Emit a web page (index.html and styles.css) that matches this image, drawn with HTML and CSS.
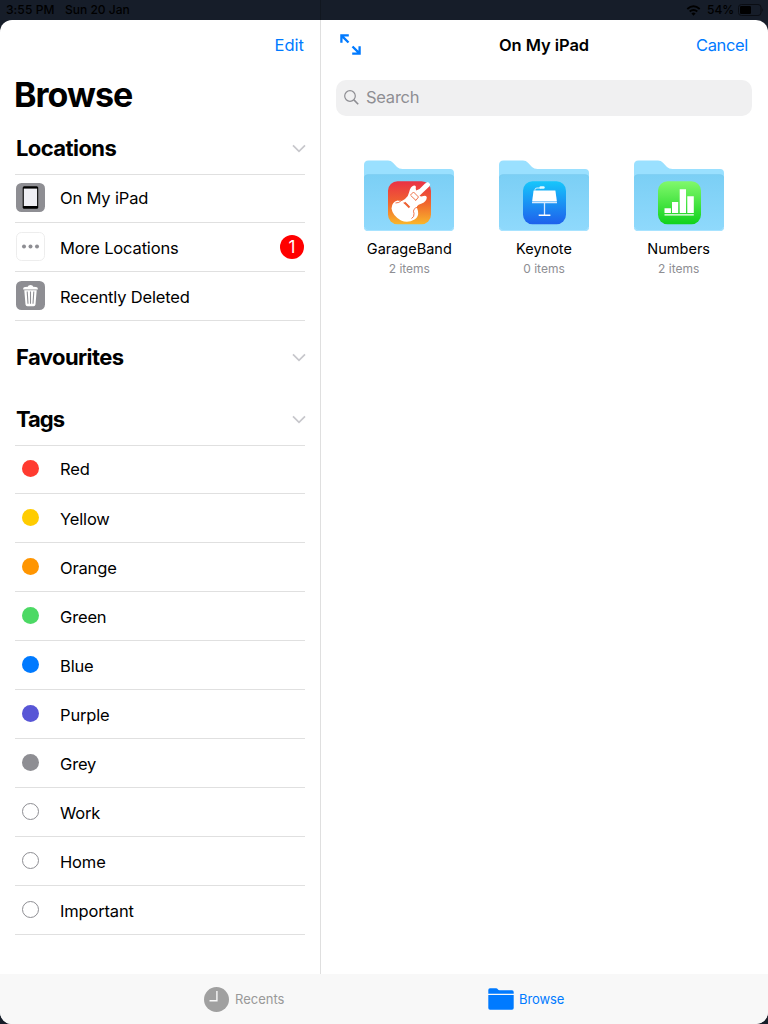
FILE: index.html
```html
<!DOCTYPE html>
<html lang="en">
<head>
<meta charset="utf-8">
<title>Browse</title>
<link rel="stylesheet" href="styles.css">
</head>
<body>
<svg class="defs" width="0" height="0" aria-hidden="true">
  <defs>
    <linearGradient id="front" x1="0" y1="0" x2="0" y2="1"><stop offset="0" stop-color="#7bcff5"/><stop offset="1" stop-color="#8fd9fc"/></linearGradient>
    <linearGradient id="gb" x1="0" y1="0" x2="0" y2="1"><stop offset="0" stop-color="#ea3145"/><stop offset=".5" stop-color="#f0652f"/><stop offset="1" stop-color="#f9b62b"/></linearGradient>
    <linearGradient id="kn" x1="0" y1="0" x2="0" y2="1"><stop offset="0" stop-color="#16c6fb"/><stop offset="1" stop-color="#1e60ec"/></linearGradient>
    <linearGradient id="nm" x1="0" y1="0" x2="0" y2="1"><stop offset="0" stop-color="#81f86c"/><stop offset="1" stop-color="#10d21c"/></linearGradient>
    <symbol id="folder" viewBox="0 0 92 72">
      <path d="M1 14V5Q1 .5 5.500 .5H25Q28 .5 30 2.700L34 7Q36 9 39.500 9H87Q91 9 91 13V20H1Z" fill="#9ae0ff"/>
      <path d="M1 18Q1 14.500 5 14.500H87Q91 14.500 91 18V67Q91 71 87 71H5Q1 71 1 67Z" fill="url(#front)"/>
      <path d="M1.500 18Q1.500 14.500 5 14.500H87Q90.500 14.500 90.500 18" fill="none" stroke="#78c9ee" stroke-width=".5"/>
      <path d="M1.500 67Q1.500 70.500 5 70.500H87Q90.500 70.500 90.500 67" fill="none" stroke="#a8e3ff" stroke-width="1"/>
    </symbol>
    <symbol id="chevron" viewBox="0 0 14 9"><path d="M1 1.300 7 7.300 13 1.300" fill="none" stroke="#c7c7cc" stroke-width="1.700"/></symbol>
  </defs>
</svg>

<header class="status">
  <span class="time">3:55 PM</span><span class="date">Sun 20 Jan</span>
  <svg class="wifi" width="14" height="11" viewBox="0 0 14 11"><g fill="none" stroke="#000"><path d="M.8 3.900Q7-1.300 13.200 3.900" stroke-width="2"/><path d="M3.200 6.500Q7 3.300 10.800 6.500" stroke-width="1.900"/></g><path d="M4.900 8.400Q7 6.800 9.100 8.400L7 10.700Z"/></svg>
  <span class="pct">54%</span>
  <svg class="battery" width="26" height="12" viewBox="0 0 26 12"><rect x=".5" y=".5" width="22.500" height="11" rx="3" fill="none" stroke="#0a0d13"/><rect x="2" y="2" width="11" height="8" rx="1.300"/><path d="M24.300 4Q26 6 24.300 8Z" fill="#090c12"/></svg>
</header>

<div class="sheet">
  <div class="panes">
    <aside class="sidebar">
      <div class="bar"><a class="edit">Edit</a></div>
      <h1>Browse</h1>
      <section class="locations">
        <div class="head"><h2>Locations</h2><svg width="14" height="9"><use href="#chevron"/></svg></div>
        <ul>
          <li><span class="slot"><svg width="29" height="29" viewBox="0 0 29 29"><rect width="29" height="29" rx="5.500" fill="#8e8e93"/><rect x="6.700" y="3.300" width="15.500" height="22.400" rx="1.500"/><rect x="7.800" y="5.600" width="13.300" height="17.400" fill="#efeff4"/></svg></span><span class="name">On My iPad</span></li>
          <li><span class="slot"><svg width="29" height="29" viewBox="0 0 29 29"><rect x=".5" y=".5" width="28" height="28" rx="5" fill="#fff" stroke="#ededed"/><g fill="#8e8e93"><circle cx="8" cy="14.400" r="2"/><circle cx="14.500" cy="14.400" r="2"/><circle cx="21" cy="14.400" r="2"/></g></svg></span><span class="name">More Locations</span><span class="badge">1</span></li>
          <li><span class="slot"><svg width="29" height="29" viewBox="0 0 29 29"><rect width="29" height="29" rx="5.500" fill="#8e8e93"/><path d="M7.200 7.500Q7.200 6.300 9 6.100L11.800 5.700Q12 4 14.500 4T17.200 5.700L20 6.100Q21.800 6.300 21.800 7.500V8.400H7.200ZM8.300 9.200H20.700L19.500 23.500Q19.300 25.200 17.600 25.200H11.400Q9.700 25.200 9.500 23.500Z" fill="#fff"/><path d="M11.200 10.500 12 22.800M14.500 10.500V22.800M17.800 10.500 17 22.800" stroke="#8e8e93" stroke-width="1.100"/></svg></span><span class="name">Recently Deleted</span></li>
        </ul>
      </section>
      <section class="favourites">
        <div class="head"><h2>Favourites</h2><svg width="14" height="9"><use href="#chevron"/></svg></div>
      </section>
      <section class="tags">
        <div class="head"><h2>Tags</h2><svg width="14" height="9"><use href="#chevron"/></svg></div>
        <ul>
          <li><span class="slot"><i class="dot red"></i></span><span class="name">Red</span></li>
          <li><span class="slot"><i class="dot yellow"></i></span><span class="name">Yellow</span></li>
          <li><span class="slot"><i class="dot orange"></i></span><span class="name">Orange</span></li>
          <li><span class="slot"><i class="dot green"></i></span><span class="name">Green</span></li>
          <li><span class="slot"><i class="dot blue"></i></span><span class="name">Blue</span></li>
          <li><span class="slot"><i class="dot purple"></i></span><span class="name">Purple</span></li>
          <li><span class="slot"><i class="dot grey"></i></span><span class="name">Grey</span></li>
          <li><span class="slot"><i class="dot"></i></span><span class="name">Work</span></li>
          <li><span class="slot"><i class="dot"></i></span><span class="name">Home</span></li>
          <li><span class="slot"><i class="dot"></i></span><span class="name">Important</span></li>
        </ul>
      </section>
    </aside>
    <main class="content">
      <div class="bar">
        <span class="left"><svg width="21" height="21" viewBox="0 0 21 21" fill="none" stroke="#007aff" stroke-width="2.300"><path d="M1.400 8.800V1.400H8.800M1.600 1.600 8.500 8.500M19.600 12.200V19.600H12.200M19.400 19.400 12.500 12.500"/></svg></span>
        <h3>On My iPad</h3>
        <a class="cancel">Cancel</a>
      </div>
      <div class="search"><svg width="15" height="15" viewBox="0 0 15 15" fill="none" stroke="#8e8e93"><circle cx="6" cy="6" r="5.300" stroke-width="1.200"/><path d="M9.900 9.900 14.200 14.200" stroke-width="1.600"/></svg><span>Search</span></div>
      <div class="grid">
        <div class="item">
          <svg width="92" height="72" viewBox="0 0 92 72"><use href="#folder"/>
            <rect x="25" y="21.300" width="43" height="43" rx="9.500" fill="url(#gb)"/>
            <path d="M62 23.600 65 22 67.200 24.200 66.500 26.200 56.500 35.800Q58 37 60.500 36Q63.500 35 63.800 37.500Q63.500 41.500 58.700 43.600Q55 44.600 54 46.300Q53.600 48 55 51Q56 57 51.500 59.400Q45 63.500 38 60.500Q29.500 55.500 28.500 48.500Q28.800 42 34.500 40.600Q39 41.500 42 39Q45.600 36 46.200 32Q47.300 26.500 51 25.600Q53.500 25.400 52.700 28.600L53.200 30.600 56.500 29Z" fill="#fff"/>
            <path d="M50.500 32 55.500 37M47.500 35.300 53 40.500M50.500 32 47.500 35M55.500 37 52.800 40.500M40.500 42.800Q44 43.300 45.500 45.500M32.500 43Q35.500 43.500 39.500 39.800M55 47Q49 48.500 51 53.500Q51.500 57 48.500 58.500" fill="none" stroke="#ed6335" stroke-width=".9"/><path d="M41.500 42.500 46.500 47.500" stroke="#ed6335" stroke-width="2"/>
          </svg>
          <b>GarageBand</b><small>2 items</small>
        </div>
        <div class="item">
          <svg width="92" height="72" viewBox="0 0 92 72"><use href="#folder"/>
            <rect x="25" y="21.300" width="43" height="43" rx="9.500" fill="url(#kn)"/>
            <path d="M35.600 30.600H57.400L58.900 41.500H34.100Z" fill="#fff"/><path d="M34 42.600H59M46.500 43V55" stroke="#d5eaff" stroke-width="1.300"/><path d="M40.700 55.200H52.400" stroke="#fff" stroke-width="1.400"/><path d="M37 30.600V29.500Q37 28 39 28H43" fill="none" stroke="#d8f5ff"/><rect x="41.500" y="26.300" width="5.200" height="2.400" rx="1.200" fill="#e3faff"/>
          </svg>
          <b>Keynote</b><small>0 items</small>
        </div>
        <div class="item">
          <svg width="92" height="72" viewBox="0 0 92 72"><use href="#folder"/>
            <rect x="25" y="21.300" width="43" height="43" rx="9.500" fill="url(#nm)"/>
            <path d="M31.500 48.200H37.900V53H31.500ZM39 42H45.200V53H39ZM46.700 29.200H53V53H46.700ZM54.300 36.200H60.800V53H54.300ZM31.500 54.200H60.800V55.400H31.500Z" fill="#fff"/>
          </svg>
          <b>Numbers</b><small>2 items</small>
        </div>
      </div>
    </main>
  </div>
  <nav class="tabs">
    <div class="tab"><svg width="25" height="25" viewBox="0 0 25 25"><circle cx="12.500" cy="12.500" r="12.500" fill="#a0a0a0"/><path d="M12.900 4V13.800H5.500" fill="none" stroke="#f8f8f8" stroke-width="1.400"/></svg><span>Recents</span></div>
    <div class="tab active"><svg width="26" height="22" viewBox="0 0 26 22" fill="#007aff"><path d="M.3 5.700V2Q.3.200 2 .200H8Q9.300.200 9.800 1.300 10.300 2.200 11.500 2.200H24Q25.700 2.200 25.700 4V5.700Z"/><path d="M.3 6.900H25.700V20Q25.700 21.800 24 21.800H2Q.3 21.800.3 20Z"/></svg><span>Browse</span></div>
  </nav>
</div>
</body>
</html>
```
FILE: styles.css
```css
* { box-sizing: border-box; margin: 0; padding: 0; }
body { width: 768px; height: 1024px; overflow: hidden; background: #161d29; color: #000; font-family: Inter, "Liberation Sans", sans-serif; font-size: 17px; }
svg { display: block; flex: none; }
.defs { position: absolute; }
ul { list-style: none; }

.status { height: 20px; display: flex; align-items: center; padding: 0 5px 0 6px; font-size: 12px; font-weight: 500; letter-spacing: .1px; background: linear-gradient(90deg, #161d29 320px, #111720 320px, #111720 321px, #161d29 321px); }
.status span { padding-bottom: 1px; }
.time { width: 59px; }
.date { flex: 1; letter-spacing: 0; }
.wifi { margin-right: 2px; width: 15px; }
.pct { margin: 0 4px 0 4px; letter-spacing: -.1px; }
.battery { margin-right: -1px; }

.sheet { height: 1004px; border-radius: 12px; overflow: hidden; background: #fff; display: flex; flex-direction: column; }
.panes { flex: 1; display: flex; }
.sidebar { width: 321px; border-right: 1px solid #dfdfdf; padding: 0 15px; }
.bar { height: 50px; display: flex; align-items: center; font-size: 16.5px; }
.bar a { color: #007aff; }
.edit { margin-left: auto; margin-right: 1px; letter-spacing: 0; }
h1 { height: 50px; line-height: 50px; font-size: 34px; font-weight: 700; letter-spacing: -.95px; margin-left: -1px; }
.head { display: flex; align-items: center; justify-content: space-between; margin-right: -1px; padding-left: 1px; height: 54px; }
.locations .head { padding-top: 2px; }
.favourites .head { height: 72px; }
.tags .head { height: 52px; }
h2 { font-size: 22px; line-height: 28px; font-weight: 700; letter-spacing: -.58px; }
.tags h2 { letter-spacing: -1px; }
ul { border-top: 1px solid #e0e0e0; }
li { height: 49px; border-bottom: 1px solid #e0e0e0; display: flex; align-items: center; }
li:first-child { height: 48px; }
.slot { width: 29px; height: 29px; margin: 0 15px 1px 1px; display: flex; align-items: center; justify-content: center; }
li:first-child .slot { margin-bottom: 2px; }
.name { font-size: 16.5px; line-height: 20px; letter-spacing: -.16px; padding-top: 1px; }
li:first-child .name { padding: 0 0 1px; }
.badge { width: 24px; height: 24px; border-radius: 50%; background: #f00; color: #fff; margin-left: auto; margin-right: 1px; line-height: 24px; text-align: center; }
.dot { width: 17px; height: 17px; border-radius: 50%; border: 1px solid #8e8e93; }
.dot.red { background: #ff3b30; border: 0; }
.dot.yellow { background: #fc0; border: 0; }
.dot.orange { background: #ff9500; border: 0; }
.dot.green { background: #4cd964; border: 0; }
.dot.blue { background: #007aff; border: 0; }
.dot.purple { background: #5856d6; border: 0; }
.dot.grey { background: #8e8e93; border: 0; }

.content { flex: 1; padding: 0 16px 0 15px; }
.content .bar { display: grid; grid-template-columns: 1fr auto 1fr; padding: 0 4px; }
.left { padding-bottom: 2px; }
.content h3 { font-size: 16.5px; font-weight: 600; letter-spacing: -.05px; }
.cancel { justify-self: end; letter-spacing: -.35px; }
.search { margin: 10px 0 0; height: 36px; border-radius: 10px; background: #f0f0f1; display: flex; align-items: center; gap: 7px; padding: 0 8px 2px; color: #8e8e93; font-size: 16.5px; letter-spacing: -.25px; }
.grid { display: grid; grid-template-columns: repeat(3, 134.7px); justify-content: center; padding-top: 44px; }
.item { display: flex; flex-direction: column; align-items: center; }
.item b { font-size: 14.5px; font-weight: 400; line-height: 18px; margin-top: 8px; letter-spacing: 0; }
.item small { font-size: 12px; line-height: 15px; margin-top: 3px; color: #8e8e93; }

.tabs { height: 50px; background: #f8f8f8; display: flex; padding-left: 204px; }
.tab { flex: none; width: 284px; display: flex; align-items: center; gap: 6px; font-size: 13px; color: #999; }
.tab.active { gap: 5px; color: #007aff; letter-spacing: -.1px; }
```
